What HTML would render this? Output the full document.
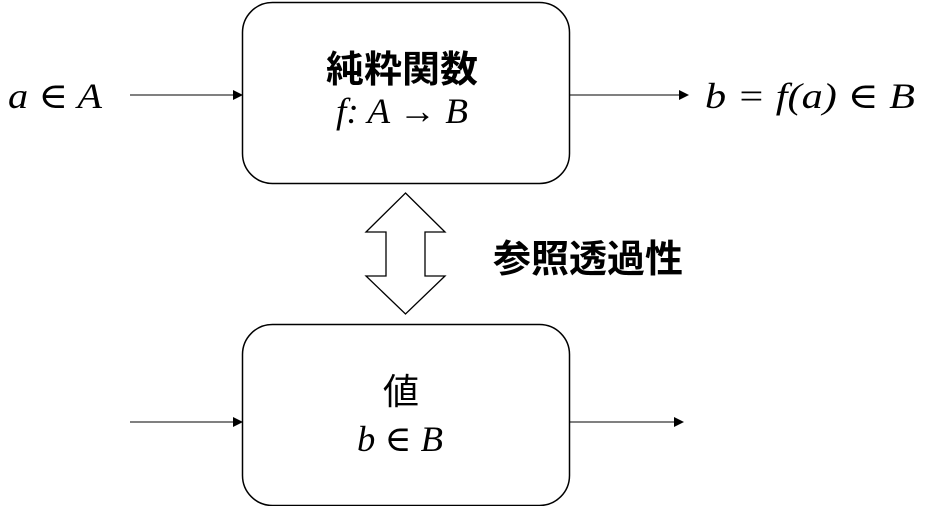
<!DOCTYPE html>
<html><head><meta charset="utf-8"><style>
html,body{margin:0;padding:0;background:#fff;width:929px;height:506px;overflow:hidden}
svg text{fill:#000}
.m{font-family:"Liberation Serif","DejaVu Serif",serif;font-style:italic;font-size:36px}
.j{font-family:"Liberation Sans","Noto Sans CJK JP",sans-serif}
</style></head><body>
<svg width="929" height="506" viewBox="0 0 929 506" xmlns="http://www.w3.org/2000/svg">
<defs><marker id="ah" markerWidth="10" markerHeight="10" refX="9" refY="5" orient="auto" markerUnits="userSpaceOnUse"><path d="M0,0 L10,5 L0,10 Z" fill="#000"/></marker></defs>
<rect x="242.5" y="2.5" width="327" height="181" rx="30" fill="none" stroke="#000" stroke-width="1.5"/>
<rect x="242.5" y="324.5" width="327" height="181" rx="30" fill="none" stroke="#000" stroke-width="1.5"/>
<line x1="130" y1="95" x2="242" y2="95" stroke="#000" stroke-width="1" marker-end="url(#ah)"/>
<line x1="570" y1="95" x2="688" y2="95" stroke="#000" stroke-width="1" marker-end="url(#ah)"/>
<line x1="130" y1="422" x2="242" y2="422" stroke="#000" stroke-width="1" marker-end="url(#ah)"/>
<line x1="570" y1="422" x2="683" y2="422" stroke="#000" stroke-width="1" marker-end="url(#ah)"/>
<path d="M405.5,193 L445,232 L425,232 L425,276 L445,276 L405.5,314 L366,276 L386,276 L386,232 L366,232 Z" fill="#fff" stroke="#000" stroke-width="1.3"/>
<text class="j" x="326" y="82" font-size="37" font-weight="bold" textLength="152" lengthAdjust="spacingAndGlyphs">純粋関数</text>
<text class="m" x="336" y="123" textLength="132" lengthAdjust="spacingAndGlyphs">f: A → B</text>
<text class="m" x="8" y="108" textLength="94" lengthAdjust="spacingAndGlyphs">a  ∈ A</text>
<text class="m" x="705" y="108" textLength="210" lengthAdjust="spacingAndGlyphs">b = f(a) ∈ B</text>
<text class="j" x="493" y="272" font-size="38" font-weight="bold" textLength="190" lengthAdjust="spacingAndGlyphs">参照透過性</text>
<text class="j" x="383" y="404" font-size="36" textLength="36" lengthAdjust="spacingAndGlyphs">値</text>
<text class="m" x="357" y="451" textLength="86" lengthAdjust="spacingAndGlyphs">b ∈ B</text>
</svg>
</body></html>
